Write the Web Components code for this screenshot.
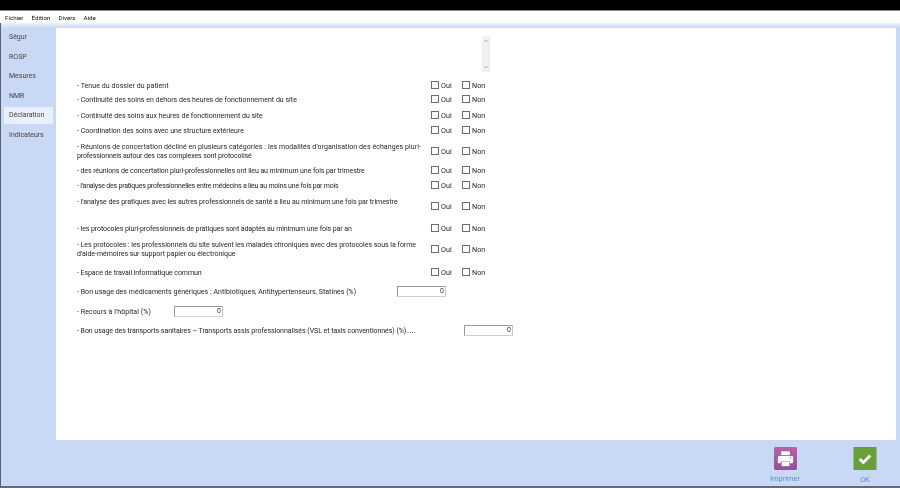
<!DOCTYPE html>
<html lang="fr">
<head>
<meta charset="utf-8">
<title>Déclaration</title>
<style>
  html, body { margin: 0; height: 100%; }
  body { font: 7px Roboto, "Liberation Sans", sans-serif; color: #262626; overflow: hidden; background: #000; }
</style>
</head>
<body>
<app-window>
  <menu-bar slot="menu">
    <span>Fichier</span><span>Édition</span><span>Divers</span><span>Aide</span>
  </menu-bar>
  <side-nav slot="nav">
    <nav-item>Ségur</nav-item>
    <nav-item>ROSP</nav-item>
    <nav-item>Mesures</nav-item>
    <nav-item>NMR</nav-item>
    <nav-item active>Déclaration</nav-item>
    <nav-item>Indicateurs</nav-item>
  </side-nav>

  <mini-scroll></mini-scroll>
  <check-row style="--gap:6px;--track:.07px">- Tenue du dossier du patient</check-row>
  <check-row style="--track:.02px">- Continuité des soins en dehors des heures de fonctionnement du site</check-row>
  <check-row style="--gap:2px">- Continuité des soins aux heures de fonctionnement du site</check-row>
  <check-row style="--gap:1px">- Coordination des soins avec une structure extérieure</check-row>
  <check-row style="--gap:4px;--h:20px;--nudge:1px;--track:.076px">- Réunions de concertation décliné en plusieurs catégories : les modalités d'organisation des échanges pluri-<br><span style="letter-spacing:-.12px">professionnels autour des cas complexes sont protocolisé</span></check-row>
  <check-row style="--gap:2px;--track:-.09px">- des réunions de concertation pluri-professionnelles ont lieu au minimum une fois par trimestre</check-row>
  <check-row style="--gap:1px;--track:-.22px">- l'analyse des pratiques professionnelles entre médecins a lieu au moins une fois par mois</check-row>
  <check-row top style="--gap:4px;--h:20px;--track:-.05px">- l'analyse des pratiques avec les autres professionnels de santé a lieu au minimum une fois par trimestre</check-row>
  <check-row style="--gap:5px;--track:-.08px">- les protocoles pluri-professionnels de pratiques sont adaptés au minimum une fois par an</check-row>
  <check-row style="--gap:4px;--h:20px;--nudge:1px;--track:-.03px">- Les protocoles : les professionnels du site suivent les malades chroniques avec des protocoles sous la forme<br>d'aide-mémoires sur support papier ou électronique</check-row>
  <check-row style="--gap:6px;--track:-.07px">- Espace de travail informatique commun</check-row>
  <number-row style="--gap:5px;--label:320px;--track:.03px">- Bon usage des médicaments génériques : Antibiotiques, Antihypertenseurs, Statines (%)</number-row>
  <number-row style="--gap:6px;--label:97px;--track:.06px">- Recours à l'hôpital (%)</number-row>
  <number-row style="--gap:5px;--label:387px;--track:-.05px">- Bon usage des transports sanitaires – Transports assis professionnalisés (VSL et taxis conventionnés) (%).....</number-row>

  <tool-button slot="actions" label="Imprimer">
    <svg viewBox="0 0 24 24" width="23" height="23">
      <defs><linearGradient id="mauve" x1="0" y1="0" x2="0" y2="1"><stop offset="0" stop-color="#b862a8"/><stop offset="1" stop-color="#94509f"/></linearGradient></defs>
      <rect width="24" height="24" rx="1.5" fill="url(#mauve)"/>
      <path d="M7.500 4.500h9v4h-9z" fill="#fff"/>
      <path d="M5.500 9.500h13a1.500 1.500 0 0 1 1.500 1.500v5a1 1 0 0 1-1 1h-2.500v-2h-9.500v2h-2a1 1 0 0 1-1-1v-5a1.500 1.500 0 0 1 1.500-1.500z" fill="#fff"/>
      <path d="M8 15.500h8v4.500h-8z" fill="#fff"/>
      <path d="M16.500 11h1.500v1h-1.500z" fill="#a2559f"/>
    </svg>
  </tool-button>
  <tool-button slot="actions" label="OK" style="--left:50px;--gap:5px">
    <svg viewBox="0 0 24 24" width="24" height="23">
      <rect width="24" height="24" fill="#67a037"/>
      <path d="M6.500 12.500l3.800 3.600 7.200-7.200" fill="none" stroke="#fff" stroke-width="3"/>
    </svg>
  </tool-button>
</app-window>

<script>
class AppWindow extends HTMLElement {
  constructor() {
    super();
    this.attachShadow({ mode: "open" }).innerHTML = `
      <style>
        :host { display: flex; flex-direction: column; height: 488px; width: 900px; box-sizing: border-box; padding-top: 10px; background: #000; filter: blur(.3px); }
        .menu { height: 12px; background: #fff; border-top: 1px solid #8a8a8a; flex: none; }
        .frame { flex: 1; display: flex; flex-direction: column; background: #c9d8f4; border-left: 1px solid #5c6070; border-bottom: 2px solid #666a78; }
        .strip { height: 5px; flex: none; background: linear-gradient(#eef2fb, #c9d8f4); }
        .middle { display: flex; height: 412px; flex: none; }
        .nav { width: 55px; flex: none; }
        .main { width: 840px; flex: none; background: #fff; }
        .actions { flex: 1; display: flex; justify-content: flex-end; padding: 7px 20px 0 0; }
      </style>
      <div class="menu"><slot name="menu"></slot></div>
      <div class="frame">
        <div class="strip"></div>
        <div class="middle">
          <div class="nav"><slot name="nav"></slot></div>
          <div class="main"><slot></slot></div>
        </div>
        <div class="actions"><slot name="actions"></slot></div>
      </div>`;
  }
}

class MenuBar extends HTMLElement {
  constructor() {
    super();
    this.attachShadow({ mode: "open" }).innerHTML = `
      <style>
        :host { display: flex; gap: 8px; height: 12px; box-sizing: border-box; padding: 1px 0 0 5px; align-items: center; color: #111; font-size: 6.200px; }
      </style>
      <slot></slot>`;
  }
}

class SideNav extends HTMLElement {
  constructor() {
    super();
    this.attachShadow({ mode: "open" }).innerHTML = `
      <style>
        :host { display: flex; flex-direction: column; gap: 3px; padding: 1px 0 0 3px; }
      </style>
      <slot></slot>`;
  }
}

class NavItem extends HTMLElement {
  constructor() {
    super();
    this.attachShadow({ mode: "open" }).innerHTML = `
      <style>
        :host { display: flex; align-items: center; width: 49px; height: 16.500px; box-sizing: border-box; padding-left: 5px; color: #444; font-size: 7px; }
        :host([active]) { background: #e9effc; }
      </style>
      <slot></slot>`;
  }
}

class MiniScroll extends HTMLElement {
  constructor() {
    super();
    this.attachShadow({ mode: "open" }).innerHTML = `
      <style>
        :host { display: flex; flex-direction: column; justify-content: space-between; width: 8px; height: 36px; margin: 8px 0 0 426px; padding: 3px 0; box-sizing: border-box; background: #f0f0f0; }
        svg { display: block; width: 8px; height: 4px; }
      </style>
      <svg viewBox="0 0 8 4"><path d="M2 3l2-2 2 2" fill="none" stroke="#a8a8a8" stroke-width=".8"/></svg>
      <svg viewBox="0 0 8 4"><path d="M2 1l2 2 2-2" fill="none" stroke="#a8a8a8" stroke-width=".8"/></svg>`;
  }
}

class CheckRow extends HTMLElement {
  constructor() {
    super();
    this.attachShadow({ mode: "open" }).innerHTML = `
      <style>
        :host { display: flex; align-items: center; height: var(--h, 14px); margin-top: var(--gap, 0); padding-left: 21px; line-height: 9px; }
        .label { width: 354px; flex: none; white-space: nowrap; letter-spacing: var(--track, 0); padding-top: var(--nudge, 2px); }
        :host([top]) .label { align-self: flex-start; }
        .checks { display: flex; gap: 11px; font-size: 7.200px; }
        .check { display: flex; align-items: center; gap: 2px; width: 20px; }
        .box { width: 6px; height: 6px; border: 1px solid #6e6e6e; background: #fff; flex: none; }
      </style>
      <div class="label"><slot></slot></div>
      <div class="checks">
        <div class="check"><span class="box"></span>Oui</div>
        <div class="check"><span class="box"></span>Non</div>
      </div>`;
  }
}

class NumberRow extends HTMLElement {
  constructor() {
    super();
    this.attachShadow({ mode: "open" }).innerHTML = `
      <style>
        :host { display: flex; align-items: center; height: 14px; margin-top: var(--gap, 0); padding-left: 21px; }
        .label { width: var(--label); flex: none; white-space: nowrap; letter-spacing: var(--track, 0); padding-top: 1px; }
        .field { width: 49px; height: 11px; box-sizing: border-box; border: 1px solid #9a9a9a; border-bottom-color: #d0d0d0; border-right-color: #c4c4c4; background: #fff; color: #333; font-size: 7px; line-height: 9px; text-align: right; padding-right: 1px; }
      </style>
      <div class="label"><slot></slot></div>
      <div class="field">0</div>`;
  }
}

class ToolButton extends HTMLElement {
  constructor() {
    super();
    this.attachShadow({ mode: "open" }).innerHTML = `
      <style>
        :host { display: flex; flex-direction: column; align-items: center; gap: var(--gap, 4px); width: 30px; margin-left: var(--left, 0); color: #5b90c8; font-size: 7.400px; }
        ::slotted(svg) { display: block; }
      </style>
      <slot></slot>
      <div>${this.getAttribute("label")}</div>`;
  }
}

customElements.define("app-window", AppWindow);
customElements.define("menu-bar", MenuBar);
customElements.define("side-nav", SideNav);
customElements.define("nav-item", NavItem);
customElements.define("mini-scroll", MiniScroll);
customElements.define("check-row", CheckRow);
customElements.define("number-row", NumberRow);
customElements.define("tool-button", ToolButton);
</script>
</body>
</html>
